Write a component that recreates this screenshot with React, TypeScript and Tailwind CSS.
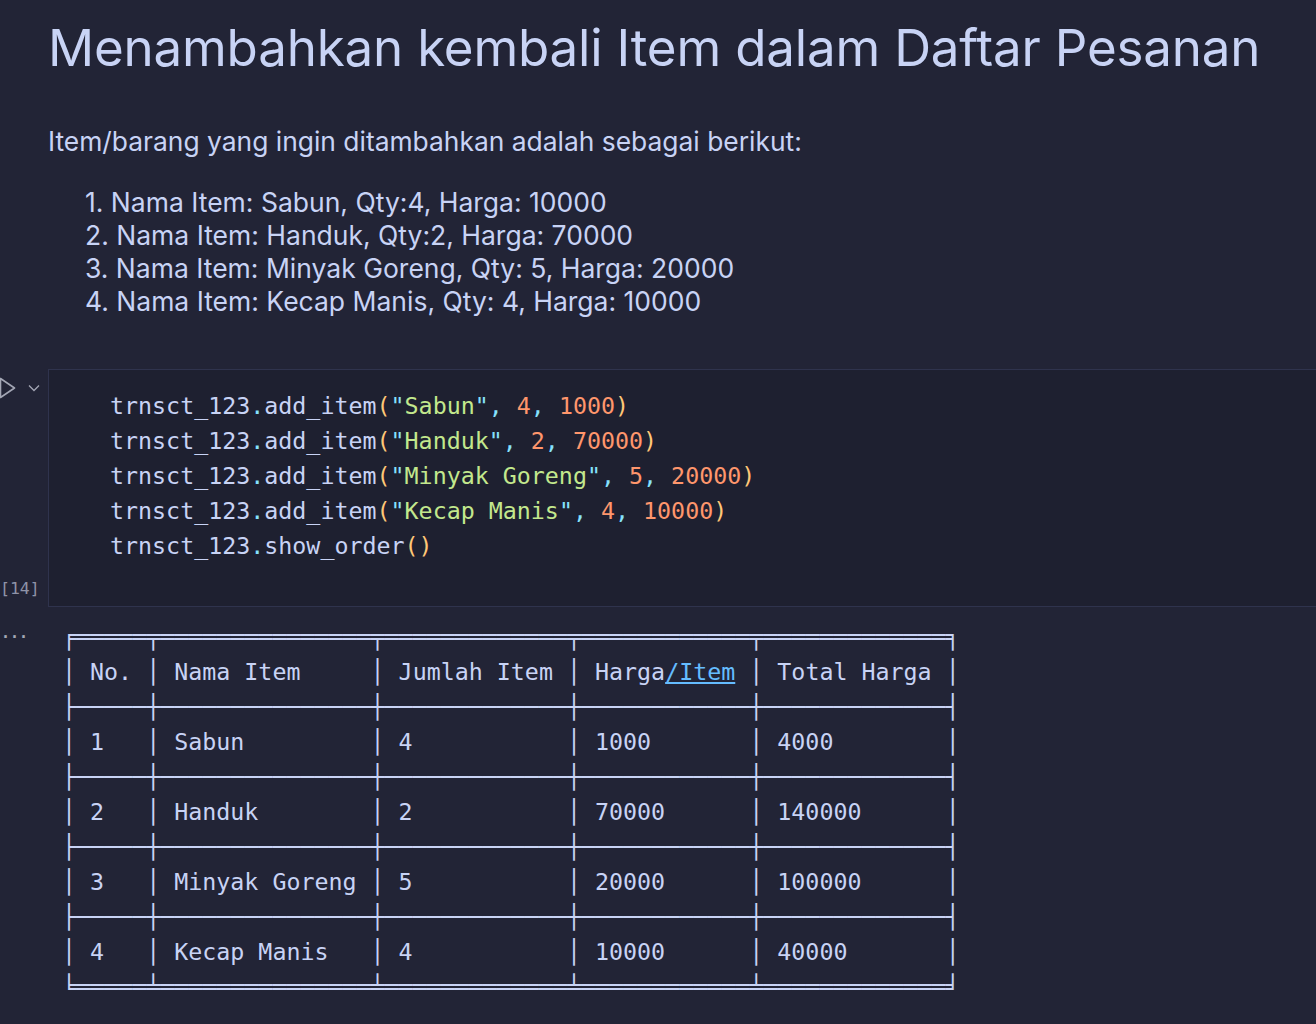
import React from "react";

const mono = { fontFamily: '"DejaVu Sans Mono", "Liberation Mono", monospace' };

function Tok({ c, children }: { c: string; children: React.ReactNode }) {
  return <span className={c}>{children}</span>;
}

const STR = "text-[#c3e88d]";
const NUM = "text-[#ff966c]";
const PUN = "text-[#86e1fc]";
const BR = "text-[#ffc777]";

function AddLine({ name, q, p }: { name: string; q: string; p: string }) {
  return (
    <div>
      trnsct_123<Tok c={PUN}>.</Tok>add_item<Tok c={BR}>(</Tok>
      <Tok c={PUN}>"</Tok>
      <Tok c={STR}>{name}</Tok>
      <Tok c={PUN}>"</Tok>
      <Tok c={PUN}>,</Tok> <Tok c={NUM}>{q}</Tok>
      <Tok c={PUN}>,</Tok> <Tok c={NUM}>{p}</Tok>
      <Tok c={BR}>)</Tok>
    </div>
  );
}

const W = [5, 15, 13, 12, 13];
const pad = (s: string, w: number) => " " + s + " ".repeat(w - 1 - s.length);
const border = (l: string, f: string, m: string, r: string) =>
  l + W.map((w) => f.repeat(w)).join(m) + r;

const rows = [
  ["1", "Sabun", "4", "1000", "4000"],
  ["2", "Handuk", "2", "70000", "140000"],
  ["3", "Minyak Goreng", "5", "20000", "100000"],
  ["4", "Kecap Manis", "4", "10000", "40000"],
];

function Row({ cells }: { cells: string[] }) {
  return <div>{"│" + cells.map((c, i) => pad(c, W[i])).join("│") + "│"}</div>;
}

export default function App() {
  return (
    <div className="min-h-[1024px] w-full bg-[#222436] text-[#c8d3f5] overflow-hidden">
      <div className="pl-[48px] pt-[12px]" style={{ fontFamily: 'Inter, "Noto Sans", sans-serif' }}>
        <h1 className="text-[51.1px] leading-[70px] font-normal tracking-[-0.2px] whitespace-nowrap">
          Menambahkan kembali Item dalam Daftar Pesanan
        </h1>
        <p className="mt-[43px] text-[26.4px] leading-[33px]">
          Item/barang yang ingin ditambahkan adalah sebagai berikut:
        </p>
        <ol className="mt-[28px] pl-[37px] text-[26.5px] leading-[33px]">
          <li>1. Nama Item: Sabun, Qty:4, Harga: 10000</li>
          <li>2. Nama Item: Handuk, Qty:2, Harga: 70000</li>
          <li>3. Nama Item: Minyak Goreng, Qty: 5, Harga: 20000</li>
          <li>4. Nama Item: Kecap Manis, Qty: 4, Harga: 10000</li>
        </ol>
      </div>

      <div className="mt-[51px] flex">
        <div className="w-[48px] shrink-0 flex flex-col justify-between pt-[8px] pb-[8px]">
          <div className="flex items-center gap-[12px] text-[#a3a6b4]">
            <svg width="17" height="22" viewBox="0 0 17 22" className="-ml-[1px]">
              <path d="M1.5 1.5 L15.5 11 L1.5 20.5 Z" fill="none" stroke="currentColor" strokeWidth="1.6" strokeLinejoin="round" />
            </svg>
            <svg width="12" height="8" viewBox="0 0 12 8">
              <path d="M1 1.5 L6 6.5 L11 1.5" fill="none" stroke="currentColor" strokeWidth="1.3" />
            </svg>
          </div>
          <div className="text-[16.5px] leading-[20px] text-[#8f93a8]" style={mono}>
            [14]
          </div>
        </div>
        <div
          className="flex-1 h-[238px] bg-[#1e2030] border border-[#2f334d] border-r-0 pl-[61px] pt-[18px] text-[23.3px] leading-[35px] whitespace-pre text-[#c8d3f5]"
          style={mono}
        >
          <AddLine name="Sabun" q="4" p="1000" />
          <AddLine name="Handuk" q="2" p="70000" />
          <AddLine name="Minyak Goreng" q="5" p="20000" />
          <AddLine name="Kecap Manis" q="4" p="10000" />
          <div>
            trnsct_123<Tok c={PUN}>.</Tok>show_order<Tok c={BR}>()</Tok>
          </div>
        </div>
      </div>

      <div className="flex">
        <div className="w-[48px] shrink-0 pt-[16px] pl-[1px] text-[#a3a6b4] text-[15px] leading-[20px] font-bold" style={mono}>
          ...
        </div>
        <div className="pl-[14px] pt-[12px] text-[23.3px] leading-[35px] whitespace-pre text-[#c8d3f5]" style={mono}>
          <div>{border("╒", "═", "╤", "╕")}</div>
          <div>
            {"│ No. │ Nama Item     │ Jumlah Item │ Harga"}
            <span className="text-[#65bcff] underline">/Item</span>
            {" │ Total Harga │"}
          </div>
          {rows.map((r, i) => (
            <React.Fragment key={i}>
              <div>{border("├", "─", "┼", "┤")}</div>
              <Row cells={r} />
            </React.Fragment>
          ))}
          <div>{border("╘", "═", "╧", "╛")}</div>
        </div>
      </div>
    </div>
  );
}
